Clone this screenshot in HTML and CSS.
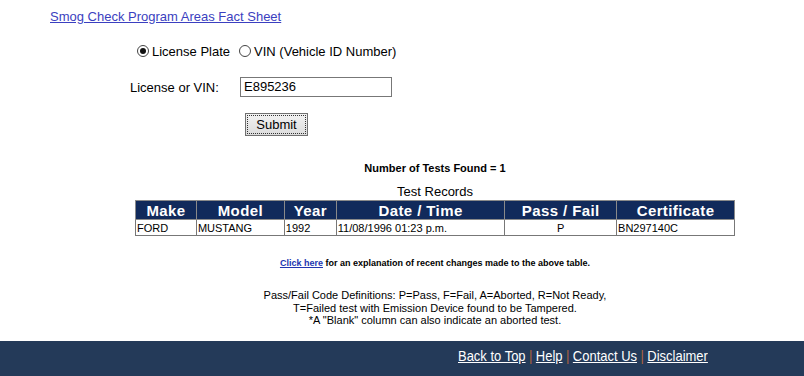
FILE: index.html
```html
<!DOCTYPE html>
<html>
<head>
<meta charset="utf-8">
<link rel="stylesheet" href="styles.css">
</head>
<body>
<div class="top"><a class="fact" href="#">Smog Check Program Areas Fact Sheet</a></div>
<form class="form">
  <div class="radios">
    <label class="radio"><span class="rb on"></span>License Plate</label>
    <label class="radio"><span class="rb"></span>VIN (Vehicle ID Number)</label>
  </div>
  <div class="field">
    <span class="flabel">License or VIN:</span>
    <span class="input">E895236</span>
  </div>
  <div class="submitrow"><span class="btn">Submit</span></div>
</form>
<div class="results">
  <div class="count">Number of Tests Found = 1</div>
  <div class="caption">Test Records</div>
  <table class="records">
    <thead>
      <tr><th class="c1">Make</th><th class="c2">Model</th><th class="c3">Year</th><th class="c4">Date / Time</th><th class="c5">Pass / Fail</th><th class="c6">Certificate</th></tr>
    </thead>
    <tbody>
      <tr><td>FORD</td><td>MUSTANG</td><td>1992</td><td>11/08/1996 01:23 p.m.</td><td class="ctr">P</td><td>BN297140C</td></tr>
    </tbody>
  </table>
  <div class="note"><a href="#">Click here</a> for an explanation of recent changes made to the above table.</div>
  <div class="defs">Pass/Fail Code Definitions: P=Pass, F=Fail, A=Aborted, R=Not Ready,<br>T=Failed test with Emission Device found to be Tampered.<br>*A "Blank" column can also indicate an aborted test.</div>
</div>
<div class="footer">
  <span class="flinks"><a href="#">Back to Top</a><span class="sep">|</span><a href="#">Help</a><span class="sep">|</span><a href="#">Contact Us</a><span class="sep">|</span><a href="#">Disclaimer</a></span>
</div>
</body>
</html>
```
FILE: styles.css
```css
html, body { margin: 0; padding: 0; background: #fff; }
body { font-family: "Liberation Sans", Arial, sans-serif; color: #000; font-size: 13px; }
.top { padding: 9px 0 0 50px; line-height: 16px; }
.fact { color: #3b3fc0; text-decoration: underline; }
.form { margin: 0; }
.radios { display: flex; align-items: center; margin: 16px 0 0 137px; height: 20px; }
.radio { display: flex; align-items: center; margin-right: 9px; }
.rb { width: 12px; height: 12px; border: 1px solid #444; border-radius: 50%; margin-right: 3px; box-sizing: border-box; position: relative; background: #fff; }
.rb.on::after { content: ""; position: absolute; left: 2px; top: 2px; width: 6px; height: 6px; border-radius: 50%; background: #111; }
.field { display: flex; align-items: center; margin: 16px 0 0 130px; height: 20px; }
.flabel { width: 110px; }
.input { width: 152px; height: 20px; box-sizing: border-box; border: 1px solid #777; padding: 1px 3px; line-height: 16px; font-size: 13px; }
.submitrow { margin: 16px 0 0 245px; }
.btn { display: inline-block; width: 63px; height: 23px; box-sizing: border-box; border: 1px solid #707070; outline: 1px dotted #333; outline-offset: -3px; background: linear-gradient(#f2f2f2, #dcdcdc); text-align: center; line-height: 21px; font-size: 13px; }
.results { padding-left: 66px; text-align: center; }
.count { font-weight: bold; font-size: 11px; margin-top: 25px; line-height: 14px; }
.caption { font-size: 13px; margin-top: 9px; line-height: 16px; }
.records { margin: 0 auto; width: 600px; border-collapse: collapse; text-align: left; }
.records th { background: #112a5b; color: #fff; font-size: 15px; font-weight: bold; letter-spacing: 0.4px; height: 18px; padding: 0; text-align: center; border: 1px solid #8a8a8a; line-height: 17px; }
.records td { font-size: 11px; height: 15px; padding: 0 1px; border: 1px solid #777; line-height: 14px; }
.records td.ctr { text-align: center; }
.c1 { width: 60px; } .c2 { width: 87px; } .c3 { width: 51px; } .c4 { width: 168px; } .c5 { width: 111px; } .c6 { width: 117px; }
.note { font-size: 9px; font-weight: bold; margin-top: 21px; line-height: 12px; }
.note a { color: #2236b0; }
.defs { font-size: 11px; margin-top: 20px; line-height: 12.5px; }
.footer { margin-top: 14px; height: 35px; background: #243a59; padding-left: 458px; box-sizing: border-box; line-height: 29px; }
.flinks { display: inline-block; font-family: "Liberation Sans", Arial, sans-serif; font-size: 15px; transform: scaleX(0.865); transform-origin: left center; white-space: nowrap; }
.footer a { color: #fff; text-decoration: underline; }
.sep { color: #b0623c; margin: 0 4px; }
```
